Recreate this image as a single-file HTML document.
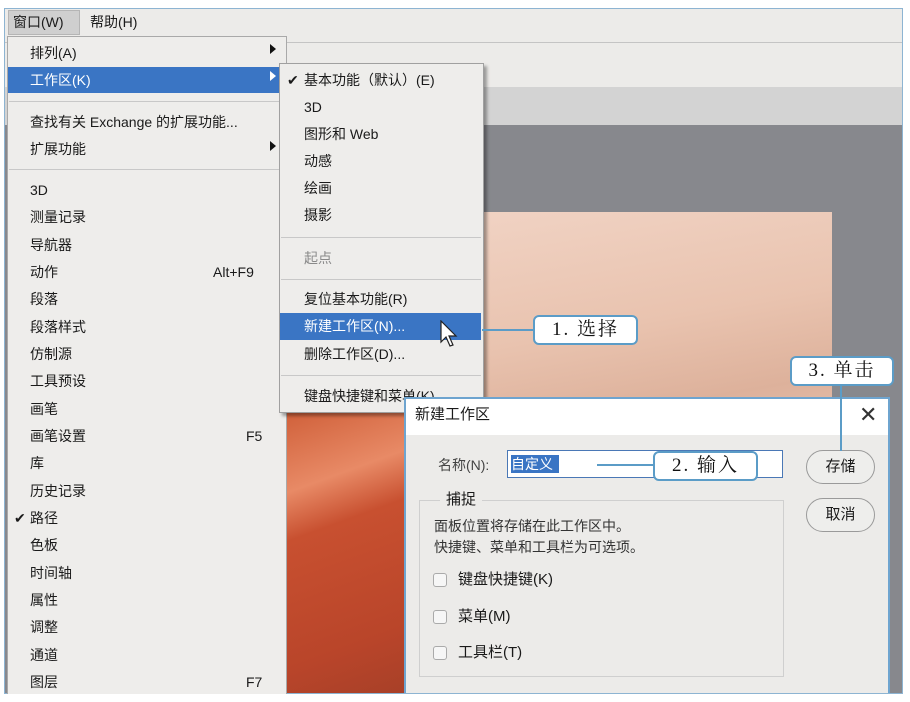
<!DOCTYPE html>
<html><head><meta charset="utf-8"><style>
*{margin:0;padding:0;box-sizing:border-box}
body{width:910px;height:702px;background:#fff;position:relative;overflow:hidden;font-family:"Liberation Sans","Noto Sans CJK SC",sans-serif;font-size:14px;color:#1a1a1a}
.a{position:absolute}
.t{position:absolute;white-space:nowrap;line-height:18px}
.sep{position:absolute;height:1px;background:#c8c8c8}
.co{position:absolute;background:#fff;border:2px solid #5b9cc7;border-radius:6px;font-family:"Liberation Serif","Noto Serif CJK SC",serif;font-size:19px;text-align:center;color:#111;letter-spacing:2px}
.ln{position:absolute;background:#5b9cc7}
.tri{position:absolute;width:0;height:0;border-left:6px solid #111;border-top:5px solid transparent;border-bottom:5px solid transparent}
.cb{position:absolute;width:14px;height:14px;border:1px solid #aaa;border-radius:3px;background:#f6f6f6}
.btn{position:absolute;width:69px;height:34px;border:1px solid #9a9a9a;border-radius:17px;background:#eeeeec;text-align:center;line-height:32px;font-size:15px}
</style></head><body>
<!-- frame -->
<div class="a" style="left:4px;top:8px;width:899px;height:686px;border:1px solid #8db4d2;background:#ecebe9"></div>
<div class="a" style="left:5px;top:42px;width:897px;height:1px;background:#c4c4c4"></div>
<div class="a" style="left:5px;top:87px;width:897px;height:38px;background:#d3d3d3"></div>
<div class="a" style="left:5px;top:125px;width:897px;height:568px;background:#87888d"></div>
<!-- image peach -->
<div class="a" style="left:287px;top:212px;width:545px;height:481px;background:linear-gradient(170deg,#f2d6c8 0%,#e9c3af 30%,#ddb19b 45%,#ebc9b7 60%,#efd2c3 100%)"></div>
<div class="a" style="left:287px;top:412px;width:118px;height:281px;background:linear-gradient(160deg,#d0603a 0%,#e88a66 25%,#c85030 40%,#b9452a 80%,#a84028 100%)"></div>
<!-- menubar -->
<div class="a" style="left:8px;top:10px;width:72px;height:25px;background:#cfcfcf;border:1px solid #b5b5b5"></div>
<div class="t" style="left:13px;top:13px">窗口(W)</div>
<div class="t" style="left:90px;top:13px">帮助(H)</div>
<!-- main menu -->
<div class="a" style="left:7px;top:36px;width:280px;height:658px;background:#eeedeb;border:1px solid #a9a9a9;border-bottom:none"></div>
<div class="a" style="left:8px;top:67px;width:278px;height:26px;background:#3a75c4"></div>
<div class="t" style="left:30px;top:44px">排列(A)</div>
<div class="t" style="left:30px;top:71px;color:#fff">工作区(K)</div>
<div class="tri" style="left:270px;top:44px"></div>
<div class="tri" style="left:270px;top:71px;border-left-color:#fff"></div>
<div class="sep" style="left:9px;top:101px;width:276px"></div>
<div class="t" style="left:30px;top:113px">查找有关 Exchange 的扩展功能...</div>
<div class="t" style="left:30px;top:140px">扩展功能</div>
<div class="tri" style="left:270px;top:141px"></div>
<div class="sep" style="left:9px;top:169px;width:276px"></div>
<div class="t" style="left:30px;top:181px">3D</div>
<div class="t" style="left:30px;top:208px">测量记录</div>
<div class="t" style="left:30px;top:236px">导航器</div>
<div class="t" style="left:30px;top:263px">动作</div><div class="t" style="left:213px;top:263px">Alt+F9</div>
<div class="t" style="left:30px;top:290px">段落</div>
<div class="t" style="left:30px;top:318px">段落样式</div>
<div class="t" style="left:30px;top:345px">仿制源</div>
<div class="t" style="left:30px;top:372px">工具预设</div>
<div class="t" style="left:30px;top:400px">画笔</div>
<div class="t" style="left:30px;top:427px">画笔设置</div><div class="t" style="left:246px;top:427px">F5</div>
<div class="t" style="left:30px;top:454px">库</div>
<div class="t" style="left:30px;top:482px">历史记录</div>
<div class="t" style="left:14px;top:509px">✔</div><div class="t" style="left:30px;top:509px">路径</div>
<div class="t" style="left:30px;top:536px">色板</div>
<div class="t" style="left:30px;top:564px">时间轴</div>
<div class="t" style="left:30px;top:591px">属性</div>
<div class="t" style="left:30px;top:618px">调整</div>
<div class="t" style="left:30px;top:646px">通道</div>
<div class="t" style="left:30px;top:673px">图层</div><div class="t" style="left:246px;top:673px">F7</div>
<!-- submenu -->
<div class="a" style="left:279px;top:63px;width:205px;height:350px;background:#eeedeb;border:1px solid #a0a0a0;box-shadow:3px 3px 3px rgba(0,0,0,.35)"></div>
<div class="a" style="left:280px;top:313px;width:201px;height:27px;background:#3a75c4"></div>
<div class="t" style="left:287px;top:71px">✔</div><div class="t" style="left:304px;top:71px">基本功能（默认）(E)</div>
<div class="t" style="left:304px;top:98px">3D</div>
<div class="t" style="left:304px;top:125px">图形和 Web</div>
<div class="t" style="left:304px;top:152px">动感</div>
<div class="t" style="left:304px;top:179px">绘画</div>
<div class="t" style="left:304px;top:206px">摄影</div>
<div class="sep" style="left:281px;top:237px;width:200px"></div>
<div class="t" style="left:304px;top:249px;color:#8a8a8a">起点</div>
<div class="sep" style="left:281px;top:279px;width:200px"></div>
<div class="t" style="left:304px;top:290px">复位基本功能(R)</div>
<div class="t" style="left:304px;top:317px;color:#fff">新建工作区(N)...</div>
<div class="t" style="left:304px;top:345px">删除工作区(D)...</div>
<div class="sep" style="left:281px;top:375px;width:200px"></div>
<div class="t" style="left:304px;top:387px">键盘快捷键和菜单(K)</div>
<svg class="a" style="left:439px;top:320px" width="20" height="30" viewBox="0 0 20 30"><path d="M2 1 L2 22 L7 17 L11 26 L14 25 L10 16 L17 16 Z" fill="#fff" stroke="#222" stroke-width="1.2"/></svg>
<!-- callouts -->
<div class="ln" style="left:482px;top:329px;width:52px;height:2px"></div>
<div class="co" style="left:533px;top:315px;width:105px;height:30px;line-height:26px">1. 选择</div>
<!-- dialog -->
<div class="a" style="left:404px;top:397px;width:486px;height:296px;background:#ecebe9;border:2px solid #6ea4cf;border-bottom:none"></div>
<div class="a" style="left:406px;top:399px;width:482px;height:36px;background:#fff"></div>
<div class="t" style="left:415px;top:406px;font-size:15px">新建工作区</div>
<div class="t" style="left:859px;top:402px;font-size:22px;line-height:26px;color:#333">✕</div>
<div class="t" style="left:438px;top:456px;color:#444">名称(N):</div>
<div class="a" style="left:507px;top:450px;width:276px;height:28px;border:1px solid #4a78b6;background:#fff"></div>
<div class="a" style="left:511px;top:455px;width:48px;height:18px;background:#3a75c4"></div>
<div class="t" style="left:511px;top:455px;color:#fff">自定义</div>
<div class="ln" style="left:597px;top:464px;width:57px;height:2px"></div>
<div class="co" style="left:653px;top:451px;width:105px;height:30px;line-height:26px">2. 输入</div>
<div class="btn" style="left:806px;top:450px">存储</div>
<div class="btn" style="left:806px;top:498px">取消</div>
<div class="ln" style="left:840px;top:384px;width:2px;height:67px"></div>
<div class="co" style="left:790px;top:356px;width:104px;height:30px;line-height:26px">3. 单击</div>
<div class="a" style="left:419px;top:500px;width:365px;height:177px;border:1px solid #cfcfcf"></div>
<div class="t" style="left:440px;top:491px;padding:0 6px;background:#ecebe9;font-size:15px">捕捉</div>
<div class="t" style="left:434px;top:517px;color:#333">面板位置将存储在此工作区中。</div>
<div class="t" style="left:434px;top:538px;color:#333">快捷键、菜单和工具栏为可选项。</div>
<div class="cb" style="left:433px;top:573px"></div><div class="t" style="left:458px;top:571px;font-size:15px">键盘快捷键(K)</div>
<div class="cb" style="left:433px;top:610px"></div><div class="t" style="left:458px;top:608px;font-size:15px">菜单(M)</div>
<div class="cb" style="left:433px;top:646px"></div><div class="t" style="left:458px;top:644px;font-size:15px">工具栏(T)</div>
</body></html>
